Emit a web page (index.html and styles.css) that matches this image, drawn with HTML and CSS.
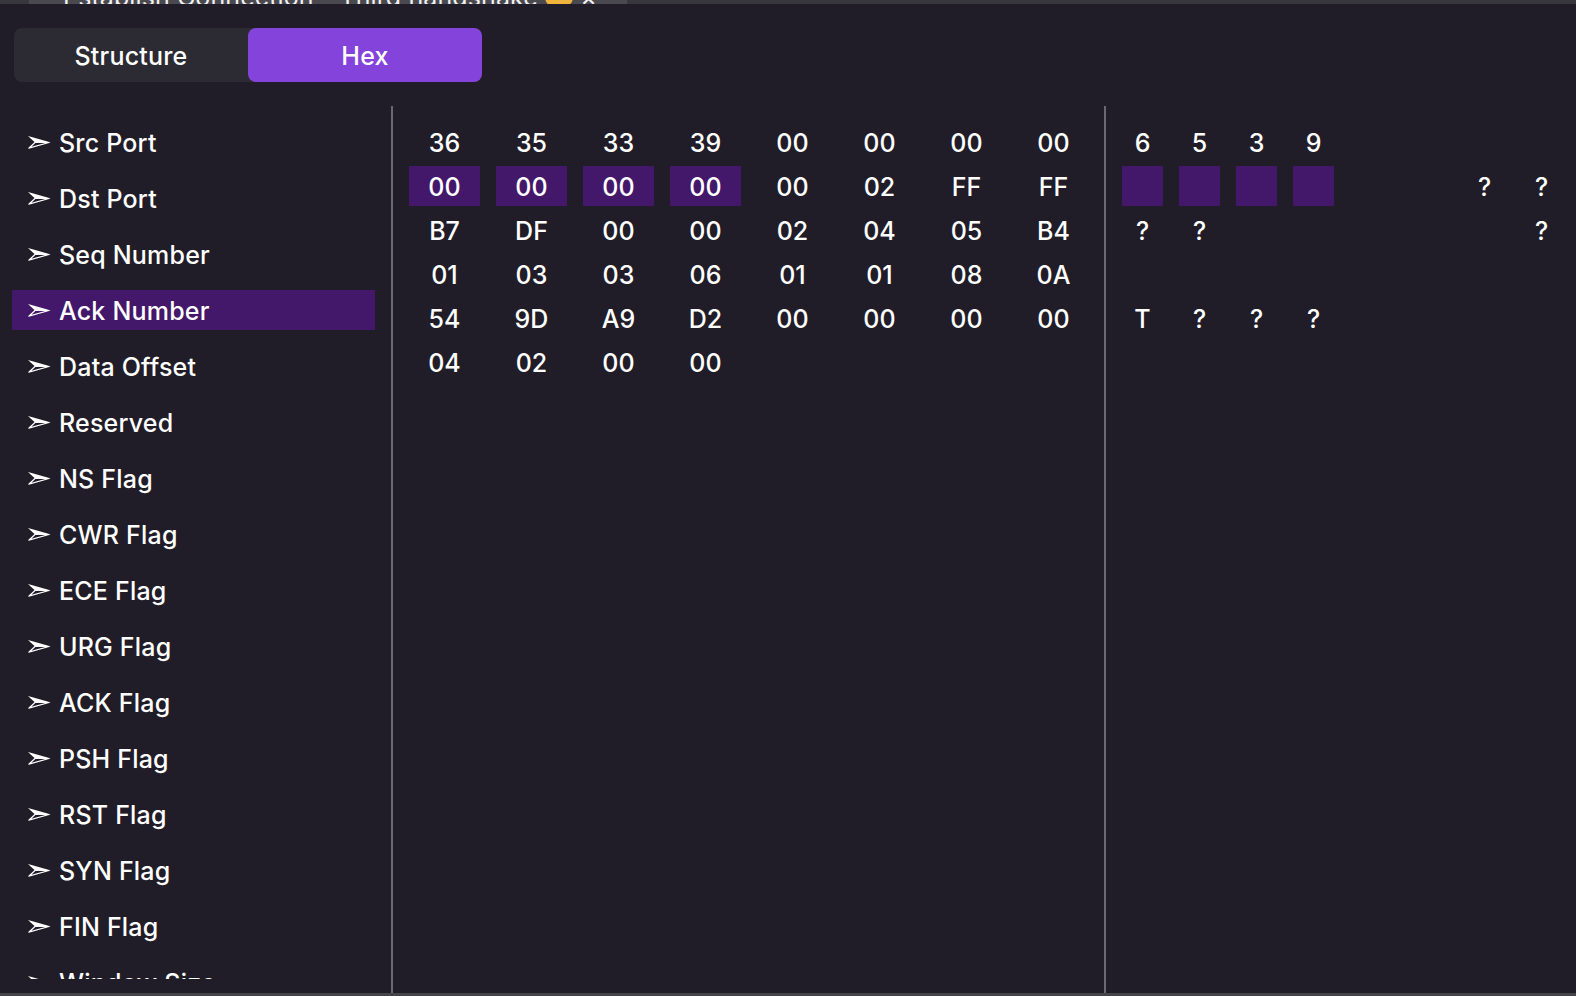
FILE: index.html
```html
<!DOCTYPE html>
<html lang="en">
<head>
<meta charset="utf-8">
<title>Packet Inspector</title>
<link rel="stylesheet" href="styles.css">
</head>
<body>
<div class="titlebar">
  <div class="doc-tab"><span class="doc-title">Establish Connection - Third handshake <span class="emoji"></span> ×</span></div>
</div>
<div class="toolbar">
  <div class="segmented">
    <button class="seg">Structure</button>
    <button class="seg active">Hex</button>
  </div>
</div>
<div class="content">
  <aside class="fields">
    <ul class="field-list">
      <li class="field"><svg class="arrow" viewBox="0 0 23 13"><path d="M0 0 L23 6.5 L7 6.5 Z" fill="#fff"/><path d="M0.8 12.2 L7 6.5 L21 6.5 Z" fill="none" stroke="#fff" stroke-width="1.2" stroke-linejoin="round"/></svg><span>Src Port</span></li>
      <li class="field"><svg class="arrow" viewBox="0 0 23 13"><path d="M0 0 L23 6.5 L7 6.5 Z" fill="#fff"/><path d="M0.8 12.2 L7 6.5 L21 6.5 Z" fill="none" stroke="#fff" stroke-width="1.2" stroke-linejoin="round"/></svg><span>Dst Port</span></li>
      <li class="field"><svg class="arrow" viewBox="0 0 23 13"><path d="M0 0 L23 6.5 L7 6.5 Z" fill="#fff"/><path d="M0.8 12.2 L7 6.5 L21 6.5 Z" fill="none" stroke="#fff" stroke-width="1.2" stroke-linejoin="round"/></svg><span>Seq Number</span></li>
      <li class="field selected"><svg class="arrow" viewBox="0 0 23 13"><path d="M0 0 L23 6.5 L7 6.5 Z" fill="#fff"/><path d="M0.8 12.2 L7 6.5 L21 6.5 Z" fill="none" stroke="#fff" stroke-width="1.2" stroke-linejoin="round"/></svg><span>Ack Number</span></li>
      <li class="field"><svg class="arrow" viewBox="0 0 23 13"><path d="M0 0 L23 6.5 L7 6.5 Z" fill="#fff"/><path d="M0.8 12.2 L7 6.5 L21 6.5 Z" fill="none" stroke="#fff" stroke-width="1.2" stroke-linejoin="round"/></svg><span>Data Offset</span></li>
      <li class="field"><svg class="arrow" viewBox="0 0 23 13"><path d="M0 0 L23 6.5 L7 6.5 Z" fill="#fff"/><path d="M0.8 12.2 L7 6.5 L21 6.5 Z" fill="none" stroke="#fff" stroke-width="1.2" stroke-linejoin="round"/></svg><span>Reserved</span></li>
      <li class="field"><svg class="arrow" viewBox="0 0 23 13"><path d="M0 0 L23 6.5 L7 6.5 Z" fill="#fff"/><path d="M0.8 12.2 L7 6.5 L21 6.5 Z" fill="none" stroke="#fff" stroke-width="1.2" stroke-linejoin="round"/></svg><span>NS Flag</span></li>
      <li class="field"><svg class="arrow" viewBox="0 0 23 13"><path d="M0 0 L23 6.5 L7 6.5 Z" fill="#fff"/><path d="M0.8 12.2 L7 6.5 L21 6.5 Z" fill="none" stroke="#fff" stroke-width="1.2" stroke-linejoin="round"/></svg><span>CWR Flag</span></li>
      <li class="field"><svg class="arrow" viewBox="0 0 23 13"><path d="M0 0 L23 6.5 L7 6.5 Z" fill="#fff"/><path d="M0.8 12.2 L7 6.5 L21 6.5 Z" fill="none" stroke="#fff" stroke-width="1.2" stroke-linejoin="round"/></svg><span>ECE Flag</span></li>
      <li class="field"><svg class="arrow" viewBox="0 0 23 13"><path d="M0 0 L23 6.5 L7 6.5 Z" fill="#fff"/><path d="M0.8 12.2 L7 6.5 L21 6.5 Z" fill="none" stroke="#fff" stroke-width="1.2" stroke-linejoin="round"/></svg><span>URG Flag</span></li>
      <li class="field"><svg class="arrow" viewBox="0 0 23 13"><path d="M0 0 L23 6.5 L7 6.5 Z" fill="#fff"/><path d="M0.8 12.2 L7 6.5 L21 6.5 Z" fill="none" stroke="#fff" stroke-width="1.2" stroke-linejoin="round"/></svg><span>ACK Flag</span></li>
      <li class="field"><svg class="arrow" viewBox="0 0 23 13"><path d="M0 0 L23 6.5 L7 6.5 Z" fill="#fff"/><path d="M0.8 12.2 L7 6.5 L21 6.5 Z" fill="none" stroke="#fff" stroke-width="1.2" stroke-linejoin="round"/></svg><span>PSH Flag</span></li>
      <li class="field"><svg class="arrow" viewBox="0 0 23 13"><path d="M0 0 L23 6.5 L7 6.5 Z" fill="#fff"/><path d="M0.8 12.2 L7 6.5 L21 6.5 Z" fill="none" stroke="#fff" stroke-width="1.2" stroke-linejoin="round"/></svg><span>RST Flag</span></li>
      <li class="field"><svg class="arrow" viewBox="0 0 23 13"><path d="M0 0 L23 6.5 L7 6.5 Z" fill="#fff"/><path d="M0.8 12.2 L7 6.5 L21 6.5 Z" fill="none" stroke="#fff" stroke-width="1.2" stroke-linejoin="round"/></svg><span>SYN Flag</span></li>
      <li class="field"><svg class="arrow" viewBox="0 0 23 13"><path d="M0 0 L23 6.5 L7 6.5 Z" fill="#fff"/><path d="M0.8 12.2 L7 6.5 L21 6.5 Z" fill="none" stroke="#fff" stroke-width="1.2" stroke-linejoin="round"/></svg><span>FIN Flag</span></li>
      <li class="field"><svg class="arrow" viewBox="0 0 23 13"><path d="M0 0 L23 6.5 L7 6.5 Z" fill="#fff"/><path d="M0.8 12.2 L7 6.5 L21 6.5 Z" fill="none" stroke="#fff" stroke-width="1.2" stroke-linejoin="round"/></svg><span>Window Size</span></li>
      <li class="field"><svg class="arrow" viewBox="0 0 23 13"><path d="M0 0 L23 6.5 L7 6.5 Z" fill="#fff"/><path d="M0.8 12.2 L7 6.5 L21 6.5 Z" fill="none" stroke="#fff" stroke-width="1.2" stroke-linejoin="round"/></svg><span>Checksum</span></li>
    </ul>
  </aside>
  <section class="hex">
    <div class="hex-grid">
      <span class="cell">36</span><span class="cell">35</span><span class="cell">33</span><span class="cell">39</span><span class="cell">00</span><span class="cell">00</span><span class="cell">00</span><span class="cell">00</span>
      <span class="cell hl">00</span><span class="cell hl">00</span><span class="cell hl">00</span><span class="cell hl">00</span><span class="cell">00</span><span class="cell">02</span><span class="cell">FF</span><span class="cell">FF</span>
      <span class="cell">B7</span><span class="cell">DF</span><span class="cell">00</span><span class="cell">00</span><span class="cell">02</span><span class="cell">04</span><span class="cell">05</span><span class="cell">B4</span>
      <span class="cell">01</span><span class="cell">03</span><span class="cell">03</span><span class="cell">06</span><span class="cell">01</span><span class="cell">01</span><span class="cell">08</span><span class="cell">0A</span>
      <span class="cell">54</span><span class="cell">9D</span><span class="cell">A9</span><span class="cell">D2</span><span class="cell">00</span><span class="cell">00</span><span class="cell">00</span><span class="cell">00</span>
      <span class="cell">04</span><span class="cell">02</span><span class="cell">00</span><span class="cell">00</span>
    </div>
  </section>
  <section class="ascii">
    <div class="ascii-grid">
      <span class="cell">6</span><span class="cell">5</span><span class="cell">3</span><span class="cell">9</span><span class="cell"></span><span class="cell"></span><span class="cell"></span><span class="cell"></span>
      <span class="cell hl"></span><span class="cell hl"></span><span class="cell hl"></span><span class="cell hl"></span><span class="cell"></span><span class="cell"></span><span class="cell">?</span><span class="cell">?</span>
      <span class="cell">?</span><span class="cell">?</span><span class="cell"></span><span class="cell"></span><span class="cell"></span><span class="cell"></span><span class="cell"></span><span class="cell">?</span>
      <span class="cell"></span><span class="cell"></span><span class="cell"></span><span class="cell"></span><span class="cell"></span><span class="cell"></span><span class="cell"></span><span class="cell"></span>
      <span class="cell">T</span><span class="cell">?</span><span class="cell">?</span><span class="cell">?</span><span class="cell"></span><span class="cell"></span><span class="cell"></span><span class="cell"></span>
      <span class="cell"></span><span class="cell"></span><span class="cell"></span><span class="cell"></span>
    </div>
  </section>
</div>
<div class="statusbar"></div>
</body>
</html>
```
FILE: styles.css
```css
* { box-sizing: border-box; }
html, body {
  margin: 0;
  padding: 0;
  height: 100%;
}
body {
  width: 1576px;
  height: 996px;
  overflow: hidden;
  background: #211d28;
  color: #ffffff;
  font-family: Inter, "Noto Sans", "DejaVu Sans", sans-serif;
  display: flex;
  flex-direction: column;
}

/* top strip (clipped document tab) */
.titlebar {
  height: 4px;
  flex: none;
  background: #39373e;
  overflow: hidden;
  display: flex;
  padding-left: 29px;
}
.doc-tab {
  width: 598px;
  height: 4px;
  background: #4b4950;
  overflow: hidden;
}
.doc-title {
  display: block;
  margin-top: -15px;
  padding-left: 34px;
  font-size: 25px;
  line-height: 20px;
  letter-spacing: 0.1px;
  color: #f2f2f2;
  white-space: nowrap;
}
.emoji {
  display: inline-block;
  width: 28px;
  height: 24px;
  border-radius: 50%;
  background: #f0b43c;
  vertical-align: -3px;
}

/* segmented control */
.toolbar {
  flex: none;
  height: 102px;
  padding: 24px 0 0 14px;
}
.segmented {
  display: flex;
  width: 468px;
  height: 54px;
  background: #2c2a32;
  border-radius: 8px;
}
.seg {
  flex: 1;
  border: 0;
  margin: 0;
  padding: 2px 0 0;
  background: transparent;
  color: #ffffff;
  font-family: inherit;
  font-size: 25px;
  font-weight: 450;
  letter-spacing: 0.2px;
  border-radius: 8px;
}
.seg.active {
  background: #8444dc;
}

/* content */
.content {
  flex: 1;
  display: flex;
  min-height: 0;
}
.fields {
  width: 393px;
  flex: none;
  border-right: 2px solid #6a6870;
  padding: 16px 16px 14px 12px;
  display: flex;
  flex-direction: column;
}
.field-list {
  list-style: none;
  margin: 0;
  padding: 0;
  flex: 1;
  min-height: 0;
  overflow: hidden;
  display: flex;
  flex-direction: column;
  gap: 16px;
}
.field {
  flex: none;
  height: 40px;
  display: flex;
  align-items: center;
  padding: 2px 0 0 16px;
  gap: 8px;
  font-size: 25px;
  font-weight: 450;
  letter-spacing: 0.2px;
  white-space: nowrap;
}
.field .arrow {
  margin-top: -2px;
}
.field.selected {
  background: #43176a;
}
.arrow {
  width: 23px;
  height: 13px;
  flex: none;
}

.hex {
  width: 713px;
  flex: none;
  border-right: 2px solid #6a6870;
  padding: 16px 0 0 16px;
}
.hex-grid {
  display: grid;
  grid-template-columns: repeat(8, 71px);
  grid-auto-rows: 40px;
  column-gap: 16px;
  row-gap: 4px;
}
.ascii {
  flex: 1;
  padding: 16px 0 0 16px;
}
.ascii-grid {
  display: grid;
  grid-template-columns: repeat(8, 41px);
  grid-auto-rows: 40px;
  column-gap: 16px;
  row-gap: 4px;
}
.cell {
  display: flex;
  align-items: center;
  justify-content: center;
  padding-top: 2px;
  font-size: 25px;
  font-weight: 450;
}
.cell.hl {
  background: #43176a;
}

.statusbar {
  height: 3px;
  flex: none;
  background: #46444b;
}
```
